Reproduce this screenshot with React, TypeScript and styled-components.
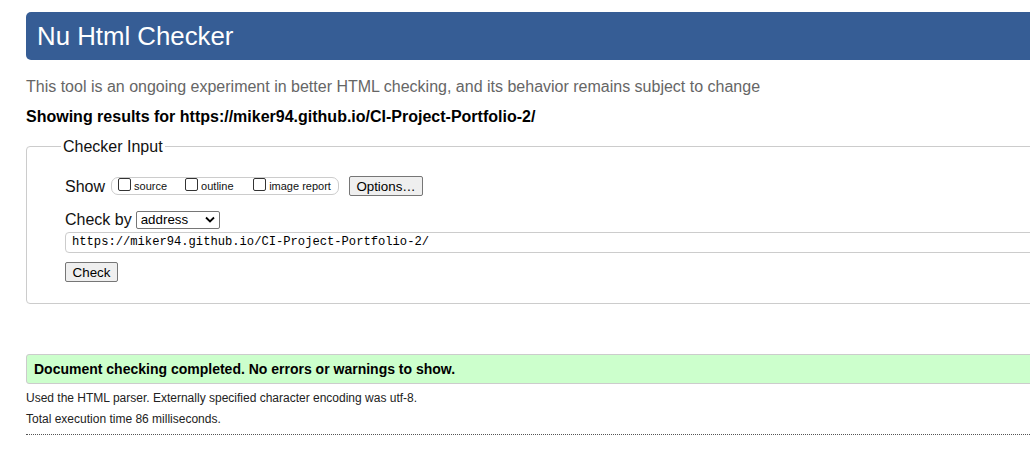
import React from "react";
import styled, { createGlobalStyle } from "styled-components";

const Global = createGlobalStyle`
  html, body { margin: 0; padding: 0; background: #fff; overflow: hidden; }
  body { font-family: "Liberation Sans", Arial, sans-serif; color: #000; }
`;

const Page = styled.div`
  padding: 12px 0 0 26px;
  width: 1100px;
`;

const Title = styled.h1`
  margin: 0;
  height: 48px;
  box-sizing: border-box;
  background: #365d95;
  color: #fff;
  border-radius: 5px;
  font-weight: normal;
  font-size: 25.8px;
  line-height: 48px;
  padding-left: 11px;
`;

const Intro = styled.p`
  margin: 17px 0 0;
  color: #666;
  font-size: 16px;
  line-height: 19px;
`;

const Results = styled.p`
  margin: 11px 0 0;
  font-weight: bold;
  font-size: 16px;
  line-height: 19px;
`;

const Fieldset = styled.fieldset`
  margin: 11px 0 0;
  border: 1px solid #ccc;
  border-radius: 4px;
  padding: 12px 0 21px 38px;
  min-width: 0;
`;

const Legend = styled.legend`
  padding: 0 2px;
  margin-left: -4px;
  font-size: 16px;
  line-height: 19px;
  color: #111;
`;

const Row = styled.div<{ $mt?: number }>`
  display: flex;
  align-items: center;
  margin-top: ${(p) => p.$mt ?? 0}px;
  font-size: 16px;
  color: #111;
`;

const Label = styled.span`
  font-size: 16px;
  line-height: 19px;
  margin-right: 6px;
`;

const Group = styled.span`
  display: inline-flex;
  align-items: center;
  height: 18px;
  box-sizing: border-box;
  border: 1px solid #ccc;
  border-radius: 7px;
  padding: 0 6px 0 6px;
  width: 228px;
`;

const CheckItem = styled.label<{ $w: number }>`
  display: inline-flex;
  align-items: center;
  width: ${(p) => p.$w}px;
  font-size: 11px;
  color: #111;
`;

const Box = styled.span`
  display: inline-block;
  width: 13px;
  height: 13px;
  box-sizing: border-box;
  border: 1px solid #333;
  border-radius: 2px;
  background: #fff;
  margin-right: 3px;
  margin-top: -3px;
`;

const Button = styled.button<{ $w: number }>`
  height: 20px;
  width: ${(p) => p.$w}px;
  box-sizing: border-box;
  border: 1px solid #767676;
  border-radius: 2px;
  background: #efefef;
  font-family: "Liberation Sans", Arial, sans-serif;
  font-size: 13.33px;
  color: #000;
  padding: 0;
  margin-left: 10px;
`;

const CheckButton = styled(Button)`
  margin-left: 0;
`;

const Select = styled.span`
  display: inline-flex;
  align-items: center;
  justify-content: space-between;
  width: 84px;
  height: 18px;
  box-sizing: border-box;
  border: 1px solid #767676;
  border-radius: 2px;
  padding: 0 4px 0 4px;
  font-size: 13.33px;
  margin-left: -2px;
  color: #000;
`;

const UrlInput = styled.div`
  margin-top: 3px;
  height: 21px;
  box-sizing: border-box;
  border: 1px solid #ccc;
  border-radius: 4px;
  padding-left: 6px;
  font-family: "Liberation Mono", "DejaVu Sans Mono", monospace;
  font-size: 12.15px;
  line-height: 19px;
  color: #000;
`;

const Success = styled.div`
  margin-top: 50px;
  height: 30px;
  box-sizing: border-box;
  background: #ccffcc;
  border: 1px solid #ccc;
  border-radius: 3px;
  padding-left: 7px;
  font-weight: bold;
  font-size: 14px;
  line-height: 28px;
  color: #000;
`;

const Note = styled.p<{ $mt: number }>`
  margin: ${(p) => p.$mt}px 0 0;
  font-size: 12px;
  line-height: 14px;
  color: #222;
`;

const Rule = styled.hr`
  margin: 8px 0 0;
  border: 0;
  border-top: 1px dotted #555;
  height: 0;
`;

const Chevron = () => (
  <svg width="10" height="7" viewBox="0 0 10 7">
    <path d="M1 1.5 L5 5.5 L9 1.5" fill="none" stroke="#000" strokeWidth="1.8" />
  </svg>
);

export default function App() {
  return (
    <>
      <Global />
      <Page>
        <Title>Nu Html Checker</Title>
        <Intro>
          This tool is an ongoing experiment in better HTML checking, and its behavior remains subject to change
        </Intro>
        <Results>Showing results for https://miker94.github.io/CI-Project-Portfolio-2/</Results>
        <Fieldset>
          <Legend>Checker Input</Legend>
          <Row $mt={8}>
            <Label>Show</Label>
            <Group>
              <CheckItem $w={68}>
                <Box />
                source
              </CheckItem>
              <CheckItem $w={69}>
                <Box />
                outline
              </CheckItem>
              <CheckItem $w={80}>
                <Box />
                image report
              </CheckItem>
            </Group>
            <Button $w={74}>Options…</Button>
          </Row>
          <Row $mt={14}>
            <Label>Check by</Label>
            <Select>
              address
              <Chevron />
            </Select>
          </Row>
          <UrlInput>https://miker94.github.io/CI-Project-Portfolio-2/</UrlInput>
          <Row $mt={9}>
            <CheckButton $w={53}>Check</CheckButton>
          </Row>
        </Fieldset>
        <Success>Document checking completed. No errors or warnings to show.</Success>
        <Note $mt={7}>Used the HTML parser. Externally specified character encoding was utf-8.</Note>
        <Note $mt={7}>Total execution time 86 milliseconds.</Note>
        <Rule />
      </Page>
    </>
  );
}
